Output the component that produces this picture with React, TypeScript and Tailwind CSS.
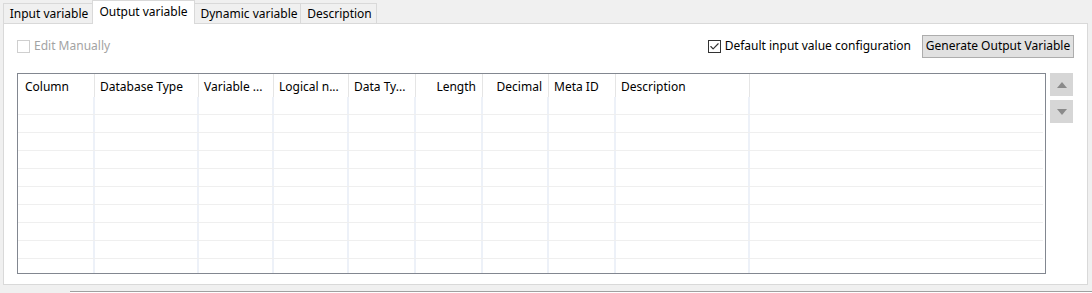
import { Check } from "lucide-react";

const cols = [
  { name: "Column", w: 77, right: false },
  { name: "Database Type", w: 104, right: false },
  { name: "Variable ...", w: 75, right: false },
  { name: "Logical n...", w: 75, right: false },
  { name: "Data Ty...", w: 67, right: false },
  { name: "Length", w: 67, right: true },
  { name: "Decimal", w: 66, right: true },
  { name: "Meta ID", w: 67, right: false },
  { name: "Description", w: 134, right: false },
];

const tabs = [
  { name: "Input variable", w: 88, active: false },
  { name: "Output variable", w: 103, active: true },
  { name: "Dynamic variable", w: 106, active: false },
  { name: "Description", w: 75, active: false },
];

const rows = Array.from({ length: 10 });

const App = () => {
  return (
    <div
      className="w-[1092px] h-[293px] bg-[#f0f0f0] overflow-hidden text-[12px] text-black flex flex-col"
      style={{ fontFamily: '"Noto Sans", sans-serif' }}
    >
      <div className="flex items-end h-[24px] pl-[3px] -mb-px">
        {tabs.map((t) =>
          t.active ? (
            <div
              key={t.name}
              className="relative z-10 h-[24px] bg-white border border-b-0 border-[#d9d9d9] flex items-center justify-center leading-none pb-[2px]"
              style={{ width: t.w }}
            >
              {t.name}
            </div>
          ) : (
            <div
              key={t.name}
              className="h-[21px] bg-[#f0f0f0] border border-b-0 border-[#d9d9d9] flex items-center justify-center leading-none -mx-px first:ml-0 pl-[2px]"
              style={{ width: t.w + 2 }}
            >
              {t.name}
            </div>
          )
        )}
      </div>
      <div className="ml-[3px] w-[1085px] h-[262px] bg-white border border-[#d9d9d9] flex flex-col">
        <div className="flex items-center h-[44px] pl-[13px] pr-[13px]">
          <div className="flex items-center gap-[4px] text-[#a3a3a3]">
            <div className="w-[13px] h-[13px] border border-[#cfcfcf] bg-white" />
            <span className="leading-none">Edit Manually</span>
          </div>
          <div className="ml-auto flex items-center gap-[4px]">
            <div className="w-[13px] h-[13px] border border-[#333] bg-white flex items-center justify-center">
              <Check className="w-[11px] h-[11px] text-[#333]" strokeWidth={2.5} />
            </div>
            <span className="leading-none">Default input value configuration</span>
          </div>
          <div className="ml-[11px] w-[152px] h-[23px] bg-[#e1e1e1] border border-[#adadad] flex items-center justify-center leading-none">
            Generate Output Variable
          </div>
        </div>
        <div className="flex pl-[13px] mt-[5px]">
          <div className="w-[1029px] h-[201px] border border-[#828790] overflow-hidden">
            <div className="flex h-[23px]">
              {cols.map((c, i) => (
                <div
                  key={c.name}
                  className={`h-full border-r border-[#e5e5e5] flex items-center leading-none pt-[2px] ${
                    c.right ? "justify-end pr-[6px]" : i === 0 ? "pl-[7px]" : "pl-[5px]"
                  }`}
                  style={{ width: c.w }}
                >
                  {c.name}
                </div>
              ))}
            </div>
            {rows.map((_, i) => (
              <div key={i} className="flex h-[18px] border-b border-[#efefef] mr-[2px]">
                {cols.map((c) => (
                  <div
                    key={c.name}
                    className="h-full border-r-[2px] border-[#edf1f8]"
                    style={{ width: c.w }}
                  />
                ))}
              </div>
            ))}
          </div>
          <div className="ml-[4px] flex flex-col gap-[4px]">
            <div className="w-[23px] h-[23px] bg-[#d6d6d6] flex items-center justify-center">
              <div className="w-0 h-0 border-l-[5px] border-r-[5px] border-b-[6px] border-l-transparent border-r-transparent border-b-[#8a8a8a]" />
            </div>
            <div className="w-[23px] h-[23px] bg-[#d6d6d6] flex items-center justify-center">
              <div className="w-0 h-0 border-l-[5px] border-r-[5px] border-t-[6px] border-l-transparent border-r-transparent border-t-[#8a8a8a]" />
            </div>
          </div>
        </div>
      </div>
      <div className="mt-auto ml-[70px] h-[2px] border-t border-[#a0a0a0] bg-white" />
    </div>
  );
};

export default App;
